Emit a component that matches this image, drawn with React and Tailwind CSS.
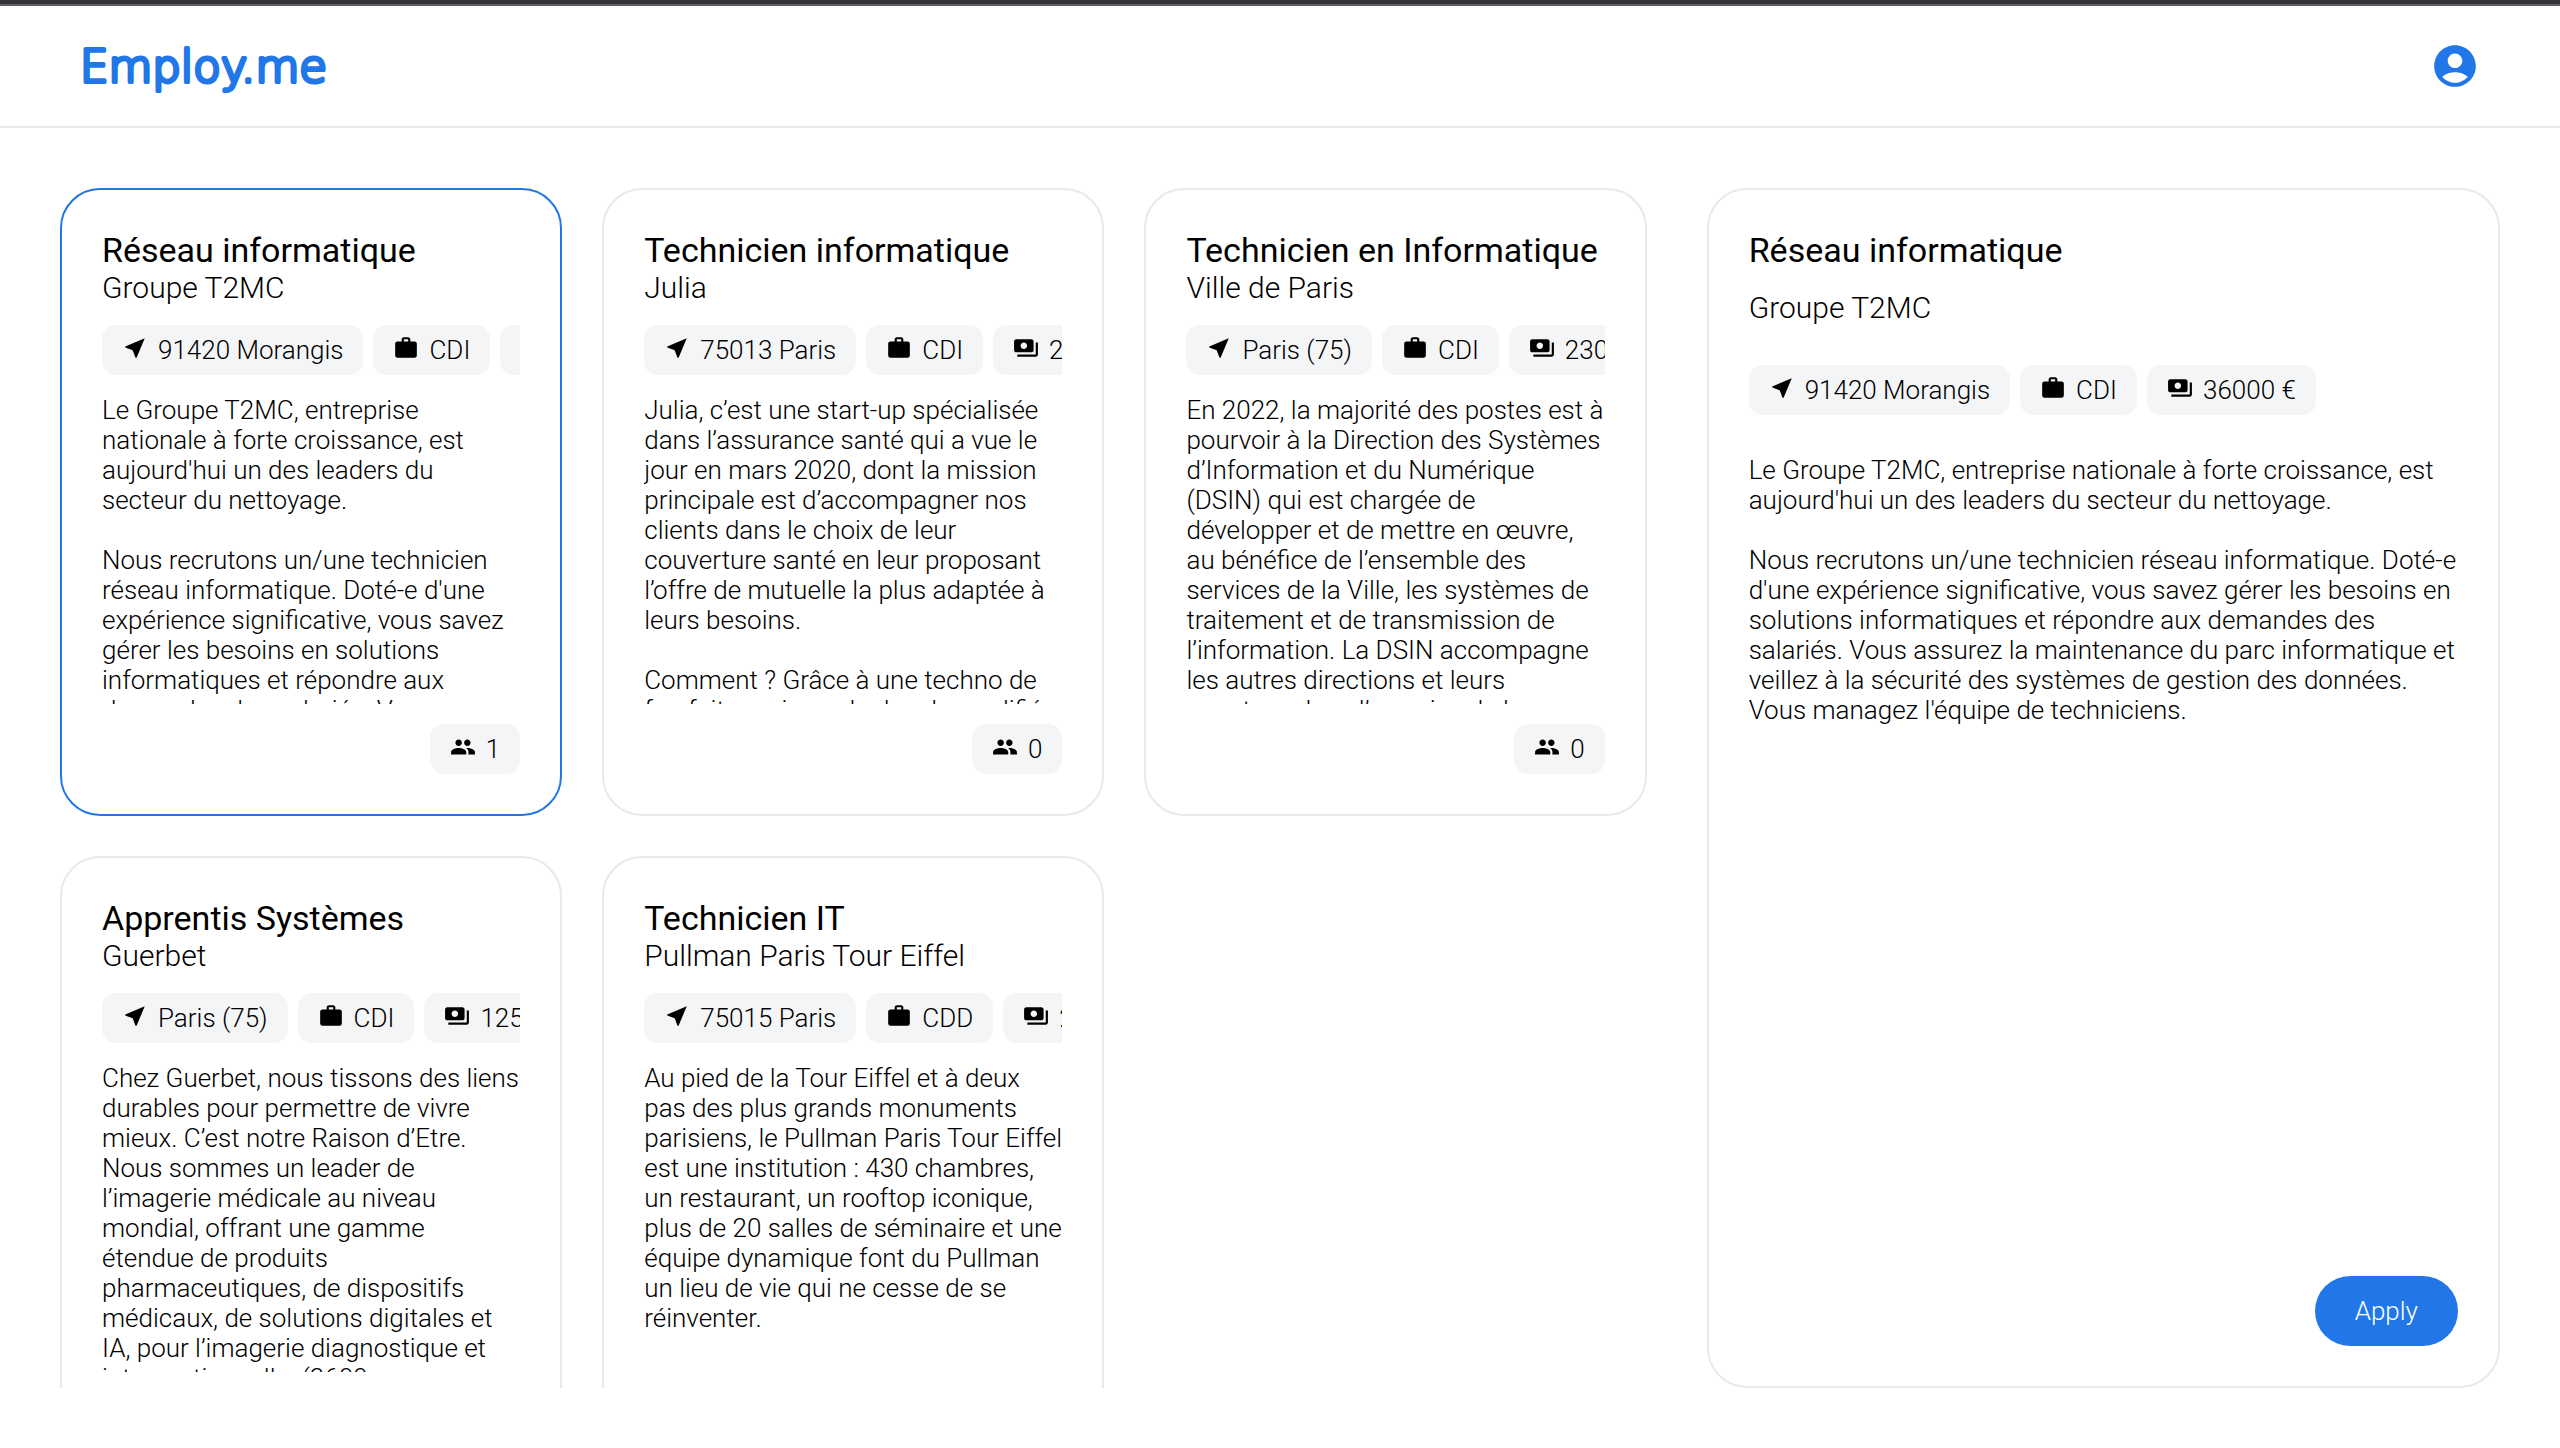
import React, { useState } from "react";
import {
  MdNearMe,
  MdWork,
  MdPayments,
  MdPeople,
  MdAccountCircle,
} from "react-icons/md";

const jobs = [
  {
    title: "Réseau informatique",
    company: "Groupe T2MC",
    place: "91420 Morangis",
    contract: "CDI",
    salary: "36000 €",
    applicants: 1,
    text: "Le Groupe T2MC, entreprise nationale à forte croissance, est aujourd'hui un des leaders du secteur du nettoyage.\n\nNous recrutons un/une technicien réseau informatique. Doté-e d'une expérience significative, vous savez gérer les besoins en solutions informatiques et répondre aux demandes des salariés. Vous assurez la maintenance du parc informatique et veillez à la sécurité des systèmes de gestion des données. Vous managez l'équipe de techniciens.",
  },
  {
    title: "Technicien informatique",
    company: "Julia",
    place: "75013 Paris",
    contract: "CDI",
    salary: "28000 €",
    applicants: 0,
    text: "Julia, c’est une start-up spécialisée dans l’assurance santé qui a vue le jour en mars 2020, dont la mission principale est d’accompagner nos clients dans le choix de leur couverture santé en leur proposant l’offre de mutuelle la plus adaptée à leurs besoins.\n\nComment ? Grâce à une techno de fou faite maison, de des de modifié",
  },
  {
    title: "Technicien en Informatique",
    company: "Ville de Paris",
    place: "Paris (75)",
    contract: "CDI",
    salary: "23000 €",
    applicants: 0,
    text: "En 2022, la majorité des postes est à pourvoir à la Direction des Systèmes d’Information et du Numérique (DSIN) qui est chargée de développer et de mettre en œuvre, au bénéfice de l’ensemble des services de la Ville, les systèmes de traitement et de transmission de l’information. La DSIN accompagne les autres directions et leurs agent·e·s dans l’exercice de leurs",
  },
  {
    title: "Apprentis Systèmes",
    company: "Guerbet",
    place: "Paris (75)",
    contract: "CDI",
    salary: "12500 €",
    applicants: 0,
    text: "Chez Guerbet, nous tissons des liens durables pour permettre de vivre mieux. C’est notre Raison d’Etre. Nous sommes un leader de l’imagerie médicale au niveau mondial, offrant une gamme étendue de produits pharmaceutiques, de dispositifs médicaux, de solutions digitales et IA, pour l’imagerie diagnostique et interventionnelle. (2600 collaborateurs)",
  },
  {
    title: "Technicien IT",
    company: "Pullman Paris Tour Eiffel",
    place: "75015 Paris",
    contract: "CDD",
    salary: "24000 €",
    applicants: 0,
    text: "Au pied de la Tour Eiffel et à deux pas des plus grands monuments parisiens, le Pullman Paris Tour Eiffel est une institution : 430 chambres, un restaurant, un rooftop iconique, plus de 20 salles de séminaire et une équipe dynamique font du Pullman un lieu de vie qui ne cesse de se réinventer.",
  },
];

function Logo() {
  return (
    <svg width="260" height="72" viewBox="0 0 260 72" className="block">
      <text
        x="0"
        y="52"
        fill="currentColor"
        stroke="currentColor"
        strokeWidth="4"
        strokeLinejoin="round"
        className="font-['DejaVu_Sans_Light','DejaVu_Sans',sans-serif] text-[45px] font-extralight"
      >
        Employ.me
      </text>
    </svg>
  );
}

function Chip({ icon: Icon, children }) {
  return (
    <span className="flex shrink-0 items-start gap-[10px] whitespace-nowrap rounded-[14px] bg-[#f4f5f7] px-5 py-[10px]">
      <Icon className="size-[26px]" aria-hidden="true" />
      <span>{children}</span>
    </span>
  );
}

function Chips({ job }) {
  return (
    <span className="flex shrink-0 gap-[10px] overflow-hidden">
      <Chip icon={MdNearMe}>{job.place}</Chip>
      <Chip icon={MdWork}>{job.contract}</Chip>
      <Chip icon={MdPayments}>{job.salary}</Chip>
    </span>
  );
}

function JobCard({ job, selected, onSelect }) {
  return (
    <button
      type="button"
      aria-pressed={selected}
      onClick={onSelect}
      className={
        "flex h-[628px] min-w-0 cursor-pointer flex-col gap-5 rounded-[40px] border-2 p-10 text-left font-light " +
        (selected ? "border-[#2277e8]" : "border-[#e9e9e9]")
      }
    >
      <span className="flex w-full flex-col">
        <span className="truncate text-[34px] leading-[40px] font-normal">
          {job.title}
        </span>
        <span className="truncate text-[30px] leading-[35px]">{job.company}</span>
      </span>
      <span className="w-full">
        <Chips job={job} />
      </span>
      <span className="block min-h-0 w-full flex-1 overflow-hidden whitespace-pre-line">
        {job.text}
      </span>
      <span className="self-end">
        <Chip icon={MdPeople}>{job.applicants}</Chip>
      </span>
    </button>
  );
}

export default function App() {
  const [selected, setSelected] = useState(0);
  const job = jobs[selected];

  return (
    <div className="flex h-screen flex-col bg-white font-['Roboto',sans-serif] text-[26px] leading-[30px] font-light text-black">
      <div className="h-[6px] shrink-0 border-b-2 border-[#5f6064] bg-[#35363a]" />
      <header className="flex h-[122px] shrink-0 items-center justify-between border-b-2 border-[#e9e9e9] px-20">
        <a href="#" className="text-[#2277e8]">
          <Logo />
        </a>
        <button type="button" aria-label="Account" className="cursor-pointer text-[#2277e8]">
          <MdAccountCircle className="size-[50px]" />
        </button>
      </header>
      <main className="grid min-h-0 flex-1 grid-cols-[minmax(0,2fr)_minmax(0,1fr)] grid-rows-[minmax(0,1fr)] gap-[60px] p-[60px]">
        <div className="grid auto-rows-max grid-cols-3 gap-10 overflow-y-auto [scrollbar-width:none]">
          {jobs.map((item, i) => (
            <JobCard
              key={item.title}
              job={item}
              selected={i === selected}
              onSelect={() => setSelected(i)}
            />
          ))}
        </div>
        <section className="flex min-w-0 flex-col rounded-[40px] border-2 border-[#e9e9e9] p-10">
          <h1 className="text-[34px] leading-[40px] font-normal">{job.title}</h1>
          <h2 className="mt-5 text-[30px] leading-[35px]">{job.company}</h2>
          <div className="mt-10">
            <Chips job={job} />
          </div>
          <p className="mt-10 min-h-0 flex-1 overflow-hidden whitespace-pre-line">
            {job.text}
          </p>
          <button
            type="button"
            className="cursor-pointer self-end rounded-full bg-[#2277e8] px-10 py-5 text-white"
          >
            Apply
          </button>
        </section>
      </main>
    </div>
  );
}
